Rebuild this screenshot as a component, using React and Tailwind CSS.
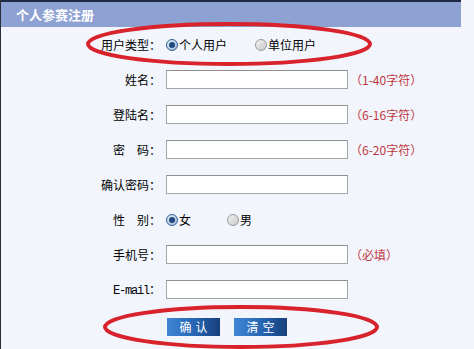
import React from 'react';

const FONT = { fontFamily: '"SimSun", "Noto Sans CJK SC", sans-serif' };
const MONO = { fontFamily: '"Liberation Mono", "Noto Sans CJK SC", monospace' };

function Radio({ checked, label }) {
  return (
    <span className="flex items-center">
      <span
        className={
          'w-[12px] h-[12px] rounded-full border flex items-center justify-center ' +
          (checked
            ? 'border-[#2f5d95] bg-gradient-to-br from-[#e9f1fb] to-[#9fb8d8]'
            : 'border-[#9a9a9a] bg-gradient-to-br from-[#f4f4f4] to-[#c9c9c9]')
        }
      >
        {checked && <span className="w-[6px] h-[6px] rounded-full bg-[#1f4a7e]" />}
      </span>
      <span className="ml-[1px]">{label}</span>
    </span>
  );
}

function Field({ label, hint }) {
  return (
    <div className="h-[35px] flex items-center">
      <div className="w-[161px] text-right pr-[1px] whitespace-pre">{label}</div>
      <div className="ml-[4px] w-[182px] h-[19px] bg-white border border-[#a5a5a5] border-t-[#8e8e8e]" />
      {hint && <div className="ml-[2px] text-[#c0393f]">{hint}</div>}
    </div>
  );
}

export default function App() {
  return (
    <div className="w-[474px] h-[349px] bg-[#f3f5fb] overflow-hidden relative text-[12px] text-black" style={FONT}>
      <div className="w-[461px] h-full border-l border-[#2a2f3c] bg-[#f2f5fc] flex flex-col">
        <div className="h-[2px] bg-[#1e2a47]" />
        <div className="h-[25px] bg-[#8da1d3] flex items-center pl-[15px] text-white font-bold text-[13px]">
          个人参赛注册
        </div>
        <div className="h-[35px] flex items-center">
          <div className="w-[161px] text-right pr-[1px]">用户类型：</div>
          <div className="ml-[4px] flex items-center">
            <Radio checked label="个人用户" />
            <span className="ml-[28px]">
              <Radio label="单位用户" />
            </span>
          </div>
        </div>
        <Field label="姓名：" hint="（1-40字符）" />
        <Field label="登陆名：" hint="（6-16字符）" />
        <Field label="密　码：" hint="（6-20字符）" />
        <Field label="确认密码：" />
        <div className="h-[35px] flex items-center">
          <div className="w-[161px] text-right pr-[1px] whitespace-pre">性　别：</div>
          <div className="ml-[4px] flex items-center">
            <Radio checked label="女" />
            <span className="ml-[36px]">
              <Radio label="男" />
            </span>
          </div>
        </div>
        <Field label="手机号：" hint="（必填）" />
        <Field label={<span><span style={MONO} className="tracking-[-1.2px]">E-mail</span>：</span>} />
        <div className="flex items-center pl-[166px] pt-[11px] gap-[14px]">
          <button className="w-[53px] h-[18px] bg-gradient-to-r from-[#3f86d6] via-[#2767b4] to-[#173f7c] text-white text-[12px] tracking-[4px] pl-[4px] leading-none">
            确认
          </button>
          <button className="w-[53px] h-[18px] bg-gradient-to-r from-[#3f86d6] via-[#2767b4] to-[#173f7c] text-white text-[12px] tracking-[4px] pl-[4px] leading-none">
            清空
          </button>
        </div>
      </div>
      <svg className="absolute inset-0 pointer-events-none" width="474" height="349">
        <ellipse cx="229" cy="44" rx="141" ry="20" fill="none" stroke="#d8232c" strokeWidth="4" />
        <ellipse cx="241" cy="327" rx="136" ry="20" fill="none" stroke="#d8232c" strokeWidth="4" />
      </svg>
    </div>
  );
}
